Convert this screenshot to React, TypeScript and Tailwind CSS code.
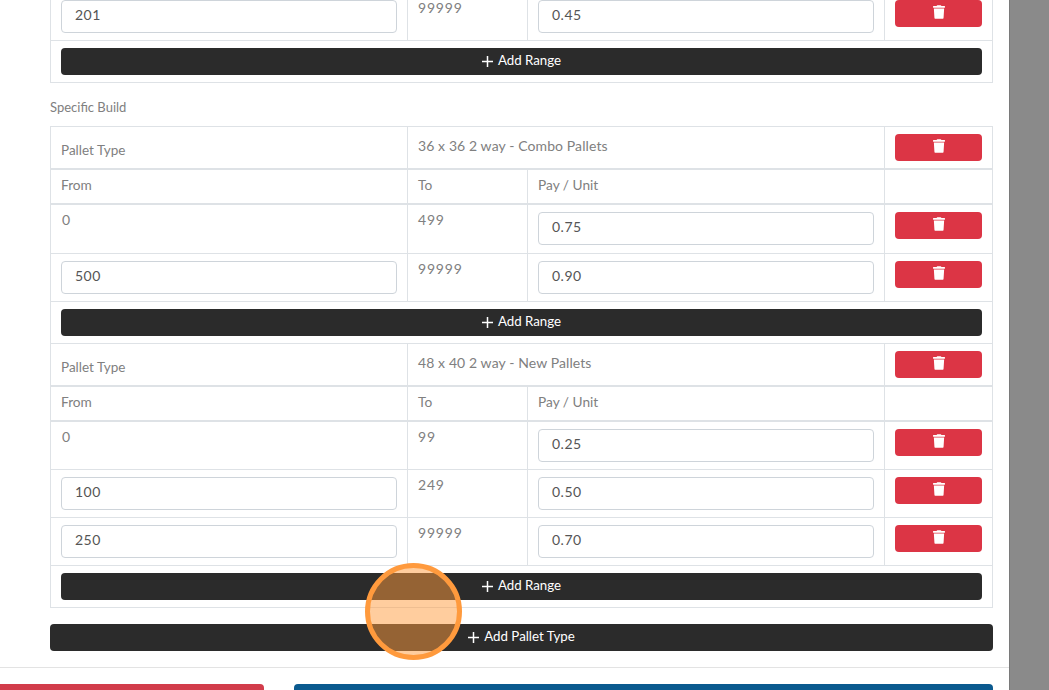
import { FaTrash } from "react-icons/fa";

const font = { fontFamily: '"Lato", "Open Sans", sans-serif' };

function Del() {
  return (
    <div className="flex h-[27px] w-[87px] items-start justify-center rounded bg-[#dc3545] pt-[5px] text-white">
      <FaTrash className="h-[14px] w-[12px]" />
    </div>
  );
}

function Input({ v }: { v: string }) {
  return (
    <div className="flex h-[33px] w-[336px] items-center rounded border border-[#ced4da] bg-white px-[13px] pb-[4px] text-[14px] tracking-[0.5px] text-[#555]">
      {v}
    </div>
  );
}

function AddRange() {
  return (
    <div className="flex h-[42px] border-b border-[#dee2e6] px-[10px] pt-[7px]">
      <Dark w="w-full" label="Add Range" />
    </div>
  );
}

function Dark({ w, label }: { w: string; label: string }) {
  return (
    <div className={`flex h-[27px] ${w} items-center justify-center gap-[5px] rounded bg-[#2b2b2b] pb-[1px] text-[13.3px] text-white`}>
      <svg width="11" height="11" viewBox="0 0 11 11" stroke="white" strokeWidth="1.5">
        <path d="M5.5 0v11M0 5.5h11" />
      </svg>
      <span>{label}</span>
    </div>
  );
}

const grid = "grid grid-cols-[357px_120px_357px_107px]";
const cell = "border-r border-[#dee2e6]";

function Header({ type }: { type: string }) {
  return (
    <>
      <div className={`${grid} h-[43px] border-b-2 border-[#dee2e6] text-[13.5px] text-[#808080]`}>
        <div className={`${cell} pl-[10px] pt-[13px]`}>Pallet Type</div>
        <div className={`${cell} col-span-2 pl-[10px] pt-[8px] text-[14px] tracking-[0.1px]`}>{type}</div>
        <div className="pl-[10px] pt-[7px]"><Del /></div>
      </div>
      <div className={`${grid} h-[35px] border-b-2 border-[#dee2e6] text-[13.7px] text-[#808080]`}>
        <div className={`${cell} pl-[10px] pt-[5px]`}>From</div>
        <div className={`${cell} pl-[10px] pt-[5px]`}>To</div>
        <div className={`${cell} pl-[10px] pt-[5px]`}>Pay / Unit</div>
        <div />
      </div>
    </>
  );
}

function Row({ from, to, pay, h = "h-[48px]", input = true }: { from: string; to: string; pay: string; h?: string; input?: boolean }) {
  return (
    <div className={`${grid} ${h} border-b border-[#dee2e6] text-[14px] text-[#808080] tracking-[0.8px]`}>
      <div className={`${cell} pl-[10px] ${input ? "pt-[7px]" : "pt-[4px]"}`}>
        {input ? <Input v={from} /> : <div className="pl-[1px]">{from}</div>}
      </div>
      <div className={`${cell} pl-[10px] pt-[4px]`}>{to}</div>
      <div className={`${cell} pl-[10px] pt-[7px]`}><Input v={pay} /></div>
      <div className="pl-[10px] pt-[7px]"><Del /></div>
    </div>
  );
}

export default function App() {
  return (
    <div style={font} className="relative flex h-[690px] w-[1049px] overflow-hidden bg-white">
      <main className="w-[1009px] shrink-0">
        <div className="-mt-[7px] pl-[50px] pr-[16px]">
          <div className="border-x border-[#dee2e6]">
            <Row from="201" to="99999" pay="0.45" />
            <AddRange />
          </div>
          <div className="flex h-[43px] items-end pb-[11px] text-[13px] leading-[16px] text-[#808080]">Specific Build</div>
          <div className="border-x border-t border-[#dee2e6]">
            <Header type="36 x 36 2 way - Combo Pallets" />
            <Row from="0" to="499" pay="0.75" h="h-[49px]" input={false} />
            <Row from="500" to="99999" pay="0.90" />
            <AddRange />
            <Header type="48 x 40 2 way - New Pallets" />
            <Row from="0" to="99" pay="0.25" input={false} />
            <Row from="100" to="249" pay="0.50" />
            <Row from="250" to="99999" pay="0.70" />
            <AddRange />
          </div>
          <div className="pt-[16px]">
            <Dark w="w-full" label="Add Pallet Type" />
          </div>
        </div>
        <div className="mt-[16px] flex gap-[30px] border-t border-[#e3e3e3] pr-[16px] pt-[16px]">
          <div className="h-[40px] w-[264px] rounded-r bg-[#d23c4b]" />
          <div className="h-[40px] flex-1 rounded bg-[#0b5a8f]" />
        </div>
      </main>
      <aside className="w-[40px] border-l border-[#7a7a7a] bg-[#8a8a8a]" />
      <div className="absolute left-[365px] top-[563px] h-[97px] w-[97px] rounded-full border-[5px] border-[#ff9a3d] bg-[#ff9a3d]/50" />
    </div>
  );
}
